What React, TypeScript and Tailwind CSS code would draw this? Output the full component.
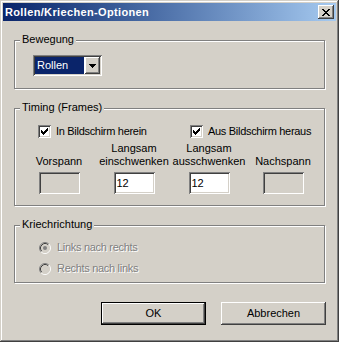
import type { ReactNode } from "react";

// Classic Win2000 dialog: "Rollen/Kriechen-Optionen".
// Bevels are drawn with stacked inset box-shadows so they take no layout space.

const SUNKEN =
  "shadow-[inset_1px_1px_0_#808080,inset_-1px_-1px_0_#ffffff,inset_2px_2px_0_#404040,inset_-2px_-2px_0_#d4d0c8]";
const RAISED =
  "shadow-[inset_-1px_-1px_0_#404040,inset_1px_1px_0_#ffffff,inset_-2px_-2px_0_#808080,inset_2px_2px_0_#d4d0c8]";
const DISABLED_TEXT = "text-[#808080] [text-shadow:1px_1px_0_#ffffff]";

function Pixels({ rows, w, h, color }: { rows: string[]; w: number; h: number; color: string }) {
  return (
    <svg width={w} height={h} viewBox={`0 0 ${w} ${h}`} shapeRendering="crispEdges" className="block">
      {rows.map((r, y) =>
        r.split("").map((c, x) => (c === "X" ? <rect key={`${x}-${y}`} x={x} y={y} width={1} height={1} fill={color} /> : null)),
      )}
    </svg>
  );
}

const CLOSE_GLYPH = ["XX....XX", ".XX..XX.", "..XXXX..", "...XX...", "..XXXX..", ".XX..XX.", "XX....XX"];
const CHECK_GLYPH = ["......X", ".....XX", "X...XXX", "XX.XXX.", "XXXXX..", ".XXX...", "..X...."];
const ARROW_GLYPH = ["XXXXXXX", ".XXXXX.", "..XXX..", "...X..."];

function GroupBox({ label, className, children }: { label: string; className: string; children: ReactNode }) {
  return (
    <div
      className={`relative w-[311px] border border-[#808080] shadow-[inset_1px_1px_0_#ffffff,1px_1px_0_#ffffff] ${className}`}
    >
      <span className="absolute left-[5px] top-[-8px] bg-[#d4d0c8] px-[2px] leading-[13px]">{label}</span>
      {children}
    </div>
  );
}

function Checkbox({ label }: { label: string }) {
  return (
    <div className="flex items-center gap-[5px]">
      <div className={`flex h-[13px] w-[13px] items-center justify-center bg-white ${SUNKEN}`}>
        <Pixels rows={CHECK_GLYPH} w={7} h={7} color="#000000" />
      </div>
      <span className="leading-[13px] tracking-[-0.3px]">{label}</span>
    </div>
  );
}

function Radio({ label, checked }: { label: string; checked?: boolean }) {
  return (
    <div className="flex items-center gap-[6px]">
      <svg width={12} height={12} viewBox="0 0 12 12" className="block">
        <circle cx={6} cy={6} r={4.5} fill="#d4d0c8" />
        <path d="M2.11 9.89 A5.5 5.5 0 0 1 9.89 2.11" fill="none" stroke="#808080" strokeWidth={1} />
        <path d="M9.89 2.11 A5.5 5.5 0 0 1 2.11 9.89" fill="none" stroke="#ffffff" strokeWidth={1} />
        <path d="M2.82 9.18 A4.5 4.5 0 0 1 9.18 2.82" fill="none" stroke="#404040" strokeWidth={1} />
        <path d="M9.18 2.82 A4.5 4.5 0 0 1 2.82 9.18" fill="none" stroke="#d4d0c8" strokeWidth={1} />
        {checked && <circle cx={6} cy={6} r={2} fill="#808080" />}
      </svg>
      <span className={`leading-[13px] tracking-[-0.3px] ${DISABLED_TEXT}`}>{label}</span>
    </div>
  );
}

function Field({ value, disabled }: { value?: string; disabled?: boolean }) {
  return (
    <div
      className={`mx-auto flex h-[22px] w-[41px] items-center pl-[3px] ${SUNKEN} ${disabled ? "bg-[#d4d0c8]" : "bg-white"}`}
    >
      {value}
    </div>
  );
}

const COLUMNS: { lines: string[]; value?: string; disabled?: boolean }[] = [
  { lines: ["Vorspann"], disabled: true },
  { lines: ["Langsam", "einschwenken"], value: "12" },
  { lines: ["Langsam", "ausschwenken"], value: "12" },
  { lines: ["Nachspann"], disabled: true },
];

function Button({ label, isDefault }: { label: string; isDefault?: boolean }) {
  return (
    <div className={`h-[23px] w-[105px] ${isDefault ? "border border-black" : ""}`}>
      <div className={`flex h-full w-full items-center justify-center ${RAISED}`}>{label}</div>
    </div>
  );
}

export default function App() {
  return (
    <div
      className="h-[342px] w-[339px] bg-[#d4d0c8] p-[3px] text-[11px] text-black shadow-[inset_-1px_-1px_0_#404040,inset_1px_1px_0_#d4d0c8,inset_-2px_-2px_0_#808080,inset_2px_2px_0_#ffffff]"
      style={{ fontFamily: '"Liberation Sans", Arial, sans-serif' }}
    >
      {/* Title bar */}
      <div className="flex h-[18px] items-center justify-between bg-gradient-to-r from-[#0a246a] to-[#a6caf0] pl-[2px] pr-[2px]">
        <span className="text-[11px] font-bold tracking-[0.35px] text-white">Rollen/Kriechen-Optionen</span>
        <div className={`flex h-[14px] w-[16px] items-center justify-center bg-[#d4d0c8] ${RAISED}`}>
          <Pixels rows={CLOSE_GLYPH} w={8} h={7} color="#000000" />
        </div>
      </div>

      <div className="pl-[11px] pt-[19px]">
        {/* Bewegung */}
        <GroupBox label="Bewegung" className="h-[49px] pl-[18px] pt-[14px]">
          <div className={`flex h-[21px] w-[69px] bg-white p-[2px] ${SUNKEN}`}>
            <div className="flex flex-1 items-center bg-[#0a246a] pl-[2px] text-white">Rollen</div>
            <div className={`ml-[1px] flex w-[15px] items-center justify-center bg-[#d4d0c8] ${RAISED}`}>
              <Pixels rows={ARROW_GLYPH} w={7} h={4} color="#000000" />
            </div>
          </div>
        </GroupBox>

        {/* Timing */}
        <GroupBox label="Timing (Frames)" className="mt-[19px] h-[98px] pt-[16px]">
          <div className="flex pl-[23px]">
            <div className="w-[152px]">
              <Checkbox label="In Bildschirm herein" />
            </div>
            <Checkbox label="Aus Bildschirm heraus" />
          </div>
          <div className="mt-[4px] ml-[7px] grid grid-cols-[74px_76px_74px_74px]">
            {COLUMNS.map((c) => (
              <div key={c.lines.join("-")} className="flex flex-col">
                <div className="flex h-[26px] flex-col justify-end text-center leading-[13px]">
                  {c.lines.map((l) => (
                    <span key={l}>{l}</span>
                  ))}
                </div>
                <div className="mt-[4px]">
                  <Field value={c.value} disabled={c.disabled} />
                </div>
              </div>
            ))}
          </div>
        </GroupBox>

        {/* Kriechrichtung */}
        <GroupBox label="Kriechrichtung" className="mt-[19px] h-[58px] pl-[24px] pt-[15px]">
          <div className="flex flex-col gap-[8px]">
            <Radio label="Links nach rechts" checked />
            <Radio label="Rechts nach links" />
          </div>
        </GroupBox>

        {/* Buttons */}
        <div className="mt-[19px] flex gap-[15px] pl-[87px]">
          <Button label="OK" isDefault />
          <Button label="Abbrechen" />
        </div>
      </div>
    </div>
  );
}
